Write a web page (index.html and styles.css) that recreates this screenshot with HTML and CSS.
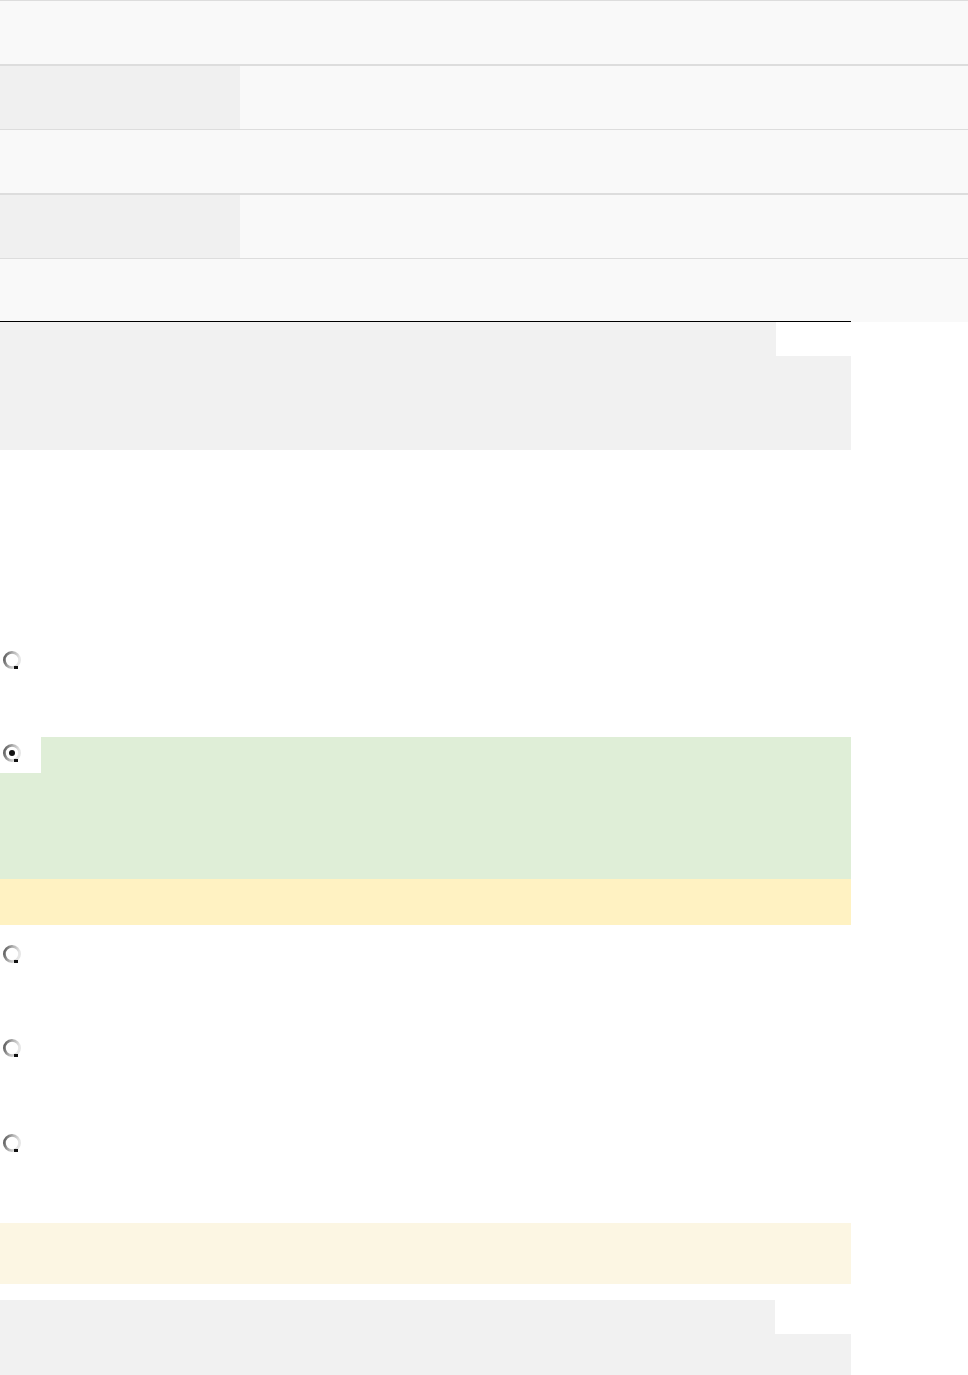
FILE: index.html
```html
<!DOCTYPE html>
<html lang="en">
<head>
<meta charset="utf-8">
<title>Quiz</title>
<link rel="stylesheet" href="styles.css">
</head>
<body>
<div class="info-table">
  <div class="row"></div>
  <div class="row row-thick split"><div class="label-cell"></div><div class="value-cell"></div></div>
  <div class="row"></div>
  <div class="row row-thick split"><div class="label-cell"></div><div class="value-cell"></div></div>
  <div class="row"></div>
</div>

<section class="tabbed">
  <div class="tab-strip"><div class="tab"></div><div class="tab-gap"></div></div>
  <div class="tab-panel"></div>
</section>

<div class="question">
  <div class="opt opt-1">
    <span class="radio"><svg width="20" height="20" viewBox="0 0 20 20"><defs><linearGradient id="rg1" x1="0" y1="0" x2="1" y2="0.3"><stop offset="0" stop-color="#555555"/><stop offset="0.55" stop-color="#b5b5b5"/><stop offset="1" stop-color="#e6e6e6"/></linearGradient></defs><circle cx="10" cy="10" r="7.6" fill="#fff" stroke="url(#rg1)" stroke-width="2.8"/><rect x="12" y="16" width="4" height="3" fill="#111"/></svg></span>
  </div>
  <div class="opt-selected">
    <div class="sel-top"><span class="radio-cell"><svg width="20" height="20" viewBox="0 0 20 20"><defs><linearGradient id="rg2" x1="0" y1="0" x2="1" y2="0.3"><stop offset="0" stop-color="#555555"/><stop offset="0.55" stop-color="#b5b5b5"/><stop offset="1" stop-color="#e6e6e6"/></linearGradient></defs><circle cx="10" cy="10" r="7.6" fill="#fff" stroke="url(#rg2)" stroke-width="2.8"/><circle cx="10" cy="10" r="3" fill="#111"/><rect x="12" y="16" width="4" height="3" fill="#111"/></svg></span><span class="sel-fill"></span></div>
    <div class="sel-body"></div>
  </div>
  <div class="feedback"></div>
  <div class="opt opt-3">
    <span class="radio"><svg width="20" height="20" viewBox="0 0 20 20"><defs><linearGradient id="rg3" x1="0" y1="0" x2="1" y2="0.3"><stop offset="0" stop-color="#555555"/><stop offset="0.55" stop-color="#b5b5b5"/><stop offset="1" stop-color="#e6e6e6"/></linearGradient></defs><circle cx="10" cy="10" r="7.6" fill="#fff" stroke="url(#rg3)" stroke-width="2.8"/><rect x="12" y="16" width="4" height="3" fill="#111"/></svg></span>
  </div>
  <div class="opt opt-4">
    <span class="radio"><svg width="20" height="20" viewBox="0 0 20 20"><defs><linearGradient id="rg4" x1="0" y1="0" x2="1" y2="0.3"><stop offset="0" stop-color="#555555"/><stop offset="0.55" stop-color="#b5b5b5"/><stop offset="1" stop-color="#e6e6e6"/></linearGradient></defs><circle cx="10" cy="10" r="7.6" fill="#fff" stroke="url(#rg4)" stroke-width="2.8"/><rect x="12" y="16" width="4" height="3" fill="#111"/></svg></span>
  </div>
  <div class="opt opt-5">
    <span class="radio"><svg width="20" height="20" viewBox="0 0 20 20"><defs><linearGradient id="rg5" x1="0" y1="0" x2="1" y2="0.3"><stop offset="0" stop-color="#555555"/><stop offset="0.55" stop-color="#b5b5b5"/><stop offset="1" stop-color="#e6e6e6"/></linearGradient></defs><circle cx="10" cy="10" r="7.6" fill="#fff" stroke="url(#rg5)" stroke-width="2.8"/><rect x="12" y="16" width="4" height="3" fill="#111"/></svg></span>
  </div>
  <div class="note"></div>
</div>

<section class="tabbed tabbed-2">
  <div class="tab-strip"><div class="tab tab-narrow"></div><div class="tab-gap"></div></div>
  <div class="tab-panel"></div>
</section>
</body>
</html>
```

FILE: styles.css
```css
html, body {
  margin: 0;
  padding: 0;
  background: #ffffff;
  font-family: "Liberation Sans", Arial, sans-serif;
}

.info-table {
  width: 968px;
}

.row {
  height: 63px;
  border-top: 1px solid #dddddd;
  background: #f9f9f9;
}

.row-thick {
  border-top-width: 2px;
}

.split {
  display: grid;
  grid-template-columns: 240px 1fr;
}

.label-cell {
  background: #f0f0f0;
}

.value-cell {
  background: #f9f9f9;
}

.tabbed {
  width: 851px;
  margin-top: -1px;
  border-top: 1px solid #000000;
}

.tab-strip {
  display: flex;
  height: 34px;
}

.tab {
  width: 776px;
  background: #f1f1f1;
}

.tab-narrow {
  width: 775px;
}

.tab-gap {
  flex: 1;
  background: #ffffff;
}

.tab-panel {
  height: 94px;
  background: #f1f1f1;
}

.tabbed-2 {
  margin-top: 16px;
  border-top: none;
}

.question {
  width: 851px;
  margin-top: 194px;
}

.opt {
  box-sizing: border-box;
  padding: 6px 0 0 2px;
}

.radio, .radio-cell {
  display: block;
  width: 20px;
  height: 20px;
}

.radio svg, .radio-cell svg {
  display: block;
}

.opt-1 { height: 93px; }
.opt-3 { height: 94px; margin-top: 13px; }
.opt-4 { height: 95px; }
.opt-5 { height: 96px; }

.opt-selected {
  height: 142px;
  display: flex;
  flex-direction: column;
}

.sel-top {
  display: flex;
  height: 36px;
}

.radio-cell {
  box-sizing: border-box;
  width: 41px;
  height: 36px;
  padding: 6px 0 0 2px;
  background: #ffffff;
}

.sel-fill {
  flex: 1;
  background: #dfeed7;
}

.sel-body {
  flex: 1;
  background: #dfeed7;
}

.feedback {
  height: 46px;
  background: #fff2c2;
}

.note {
  height: 61px;
  background: #fcf6e3;
}
```
